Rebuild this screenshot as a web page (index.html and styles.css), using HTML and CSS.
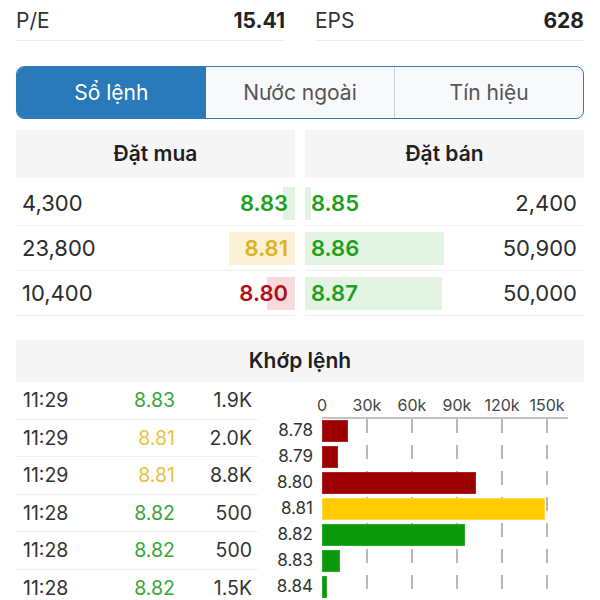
FILE: index.html
```html
<!DOCTYPE html>
<html lang="vi">
<head>
	<meta charset="utf-8"/>
	<meta name="viewport" content="width=device-width, initial-scale=1">
	<title>Sổ lệnh</title>
	<link rel="stylesheet" href="styles.css">
</head>
<body>
	<div id="stats">
		<div class="stat"><span>P/E</span><strong>15.41</strong></div>
		<div class="stat"><span>EPS</span><strong>628</strong></div>
	</div>

	<div id="tabs">
		<div class="tab active">Sổ lệnh</div>
		<div class="tab">Nước ngoài</div>
		<div class="tab">Tín hiệu</div>
	</div>

	<div id="book">
		<div class="side bid">
			<div class="side-header">Đặt mua</div>
			<div class="book-row">
				<span class="fill up" style="width:12px"></span>
				<span class="qty">4,300</span>
				<span class="price up">8.83</span>
			</div>
			<div class="book-row">
				<span class="fill ref" style="width:66px"></span>
				<span class="qty">23,800</span>
				<span class="price ref">8.81</span>
			</div>
			<div class="book-row">
				<span class="fill down" style="width:28px"></span>
				<span class="qty">10,400</span>
				<span class="price down">8.80</span>
			</div>
		</div>

		<div class="side ask">
			<div class="side-header">Đặt bán</div>
			<div class="book-row">
				<span class="fill up" style="width:6px"></span>
				<span class="price up">8.85</span>
				<span class="qty">2,400</span>
			</div>
			<div class="book-row">
				<span class="fill up" style="width:139px"></span>
				<span class="price up">8.86</span>
				<span class="qty">50,900</span>
			</div>
			<div class="book-row">
				<span class="fill up" style="width:137px"></span>
				<span class="price up">8.87</span>
				<span class="qty">50,000</span>
			</div>
		</div>
	</div>

	<div id="match">
		<div class="section-header">Khớp lệnh</div>
		<div id="match-body">
			<div id="trades">
				<div class="trade"><span>11:29</span><span class="up">8.83</span><span>1.9K</span></div>
				<div class="trade"><span>11:29</span><span class="ref">8.81</span><span>2.0K</span></div>
				<div class="trade"><span>11:29</span><span class="ref">8.81</span><span>8.8K</span></div>
				<div class="trade"><span>11:28</span><span class="up">8.82</span><span>500</span></div>
				<div class="trade"><span>11:28</span><span class="up">8.82</span><span>500</span></div>
				<div class="trade"><span>11:28</span><span class="up">8.82</span><span>1.5K</span></div>
			</div>

			<div id="chart">
				<div></div>
				<div class="x-axis">
					<span style="left:0px">0</span>
					<span style="left:45px">30k</span>
					<span style="left:90px">60k</span>
					<span style="left:135px">90k</span>
					<span style="left:180px">120k</span>
					<span style="left:225px">150k</span>
				</div>
				<div class="y-labels">
					<span>8.78</span>
					<span>8.79</span>
					<span>8.80</span>
					<span>8.81</span>
					<span>8.82</span>
					<span>8.83</span>
					<span>8.84</span>
				</div>
				<div class="plot">
					<i class="gridline" style="left:45px"></i>
					<i class="gridline" style="left:90px"></i>
					<i class="gridline" style="left:135px"></i>
					<i class="gridline" style="left:180px"></i>
					<i class="gridline" style="left:225px"></i>
					<div class="bar down" style="width:26px"></div>
					<div class="bar down" style="width:16px"></div>
					<div class="bar down" style="width:154px"></div>
					<div class="bar ref" style="width:223px"></div>
					<div class="bar up" style="width:143px"></div>
					<div class="bar up" style="width:18px"></div>
					<div class="bar up" style="width:5px"></div>
				</div>
			</div>
		</div>
	</div>
</body>
</html>
```

FILE: styles.css
```css
* {
	box-sizing: border-box;
}

html, body {
	overflow: hidden;
}

body {
	margin: 0;
	padding: 0 16px;
	font-family: Inter, "Liberation Sans", sans-serif;
	color: #2b2b2b;
	background: white;
}

/* P/E, EPS */
#stats {
	display: grid;
	grid-template-columns: 1fr 1fr;
	column-gap: 30px;
}

.stat {
	display: flex;
	justify-content: space-between;
	align-items: center;
	height: 41px;
	border-bottom: 1px solid #eeeeee;
	font-size: 21px;
}

.stat span {
	color: #333;
}

.stat strong {
	color: #222;
}

/* tabs */
#tabs {
	display: grid;
	grid-template-columns: 1fr 1fr 1fr;
	margin-top: 25px;
	height: 53px;
	border: 1.5px solid #2f7cb9;
	border-radius: 8px;
	overflow: hidden;
	background: #f8f9fa;
}

.tab {
	display: flex;
	align-items: center;
	justify-content: center;
	font-size: 21px;
	color: #555;
	border-left: 1px solid #c9d0d6;
}

.tab:first-child,
.tab.active + .tab {
	border-left: 0;
}

.tab.active {
	background: #2a79b8;
	color: white;
}

/* order book */
#book {
	display: grid;
	grid-template-columns: 1fr 1fr;
	column-gap: 10px;
	margin-top: 11px;
}

.side-header,
.section-header {
	text-align: center;
	font-weight: 600;
	font-size: 21px;
	color: #1f1f1f;
	background: #f5f5f5;
}

.side-header {
	height: 48px;
	line-height: 48px;
	margin-bottom: 3px;
}

.book-row {
	position: relative;
	display: flex;
	justify-content: space-between;
	align-items: center;
	height: 45px;
	padding: 0 7px 0 6px;
	border-bottom: 1px solid #f0f0f0;
	font-size: 22px;
}

.book-row .qty,
.book-row .price {
	position: relative;
}

.book-row .price {
	font-weight: 600;
}

.fill {
	position: absolute;
	top: 6px;
	bottom: 5px;
}

.bid .fill {
	right: 0;
}

.ask .fill {
	left: 0;
}

.fill.up { background: #e2f3e2; }
.fill.ref { background: #fbf1d6; }
.fill.down { background: #f8dada; }

.price.up { color: #1ea01e; }
.price.ref { color: #e2b21e; }
.price.down { color: #b0101a; }

/* matched orders */
#match {
	margin-top: 24px;
}

.section-header {
	height: 42px;
	line-height: 42px;
}

#match-body {
	display: grid;
	grid-template-columns: 242px 1fr;
	column-gap: 13px;
}

.trade {
	display: grid;
	grid-template-columns: 1fr 70px 77px;
	align-items: center;
	height: 37.5px;
	padding: 0 6px 0 7px;
	border-bottom: 1px solid #efefef;
	font-size: 19.5px;
	color: #333;
}

.trade span + span {
	text-align: right;
}

.trade .up { color: #3aa63a; }
.trade .ref { color: #eac23e; }

/* volume by price chart */
#chart {
	display: grid;
	grid-template-columns: 42px 1fr;
	align-content: start;
	column-gap: 9px;
	padding-right: 16px;
	font-size: 17px;
	color: #333;
}

.x-axis {
	position: relative;
	height: 35px;
}

.x-axis span {
	position: absolute;
	bottom: 2px;
	line-height: 20px;
	font-size: 16px;
	color: #444;
	transform: translateX(-50%);
}

.y-labels {
	display: flex;
	flex-direction: column;
	gap: 4px;
	padding-top: 2px;
	text-align: right;
}

.y-labels span {
	height: 22px;
	line-height: 22px;
}

.plot {
	position: relative;
	display: flex;
	flex-direction: column;
	gap: 4px;
	border-top: 2px solid #c4c4c4;
	padding-top: 1px;
}

.gridline {
	position: absolute;
	top: 0;
	bottom: 0;
	width: 2px;
	margin-left: -1px;
	background: repeating-linear-gradient(to bottom, #b8b8b8 0 14px, transparent 14px 26px);
}

.bar {
	position: relative;
	height: 22px;
}

.bar.down { background: #9c0000; border: 1px solid #b02222; }
.bar.ref { background: #ffcc00; border: 1px solid #ffd84a; }
.bar.up { background: #0c990c; border: 1px solid #2aaa2a; }
```
